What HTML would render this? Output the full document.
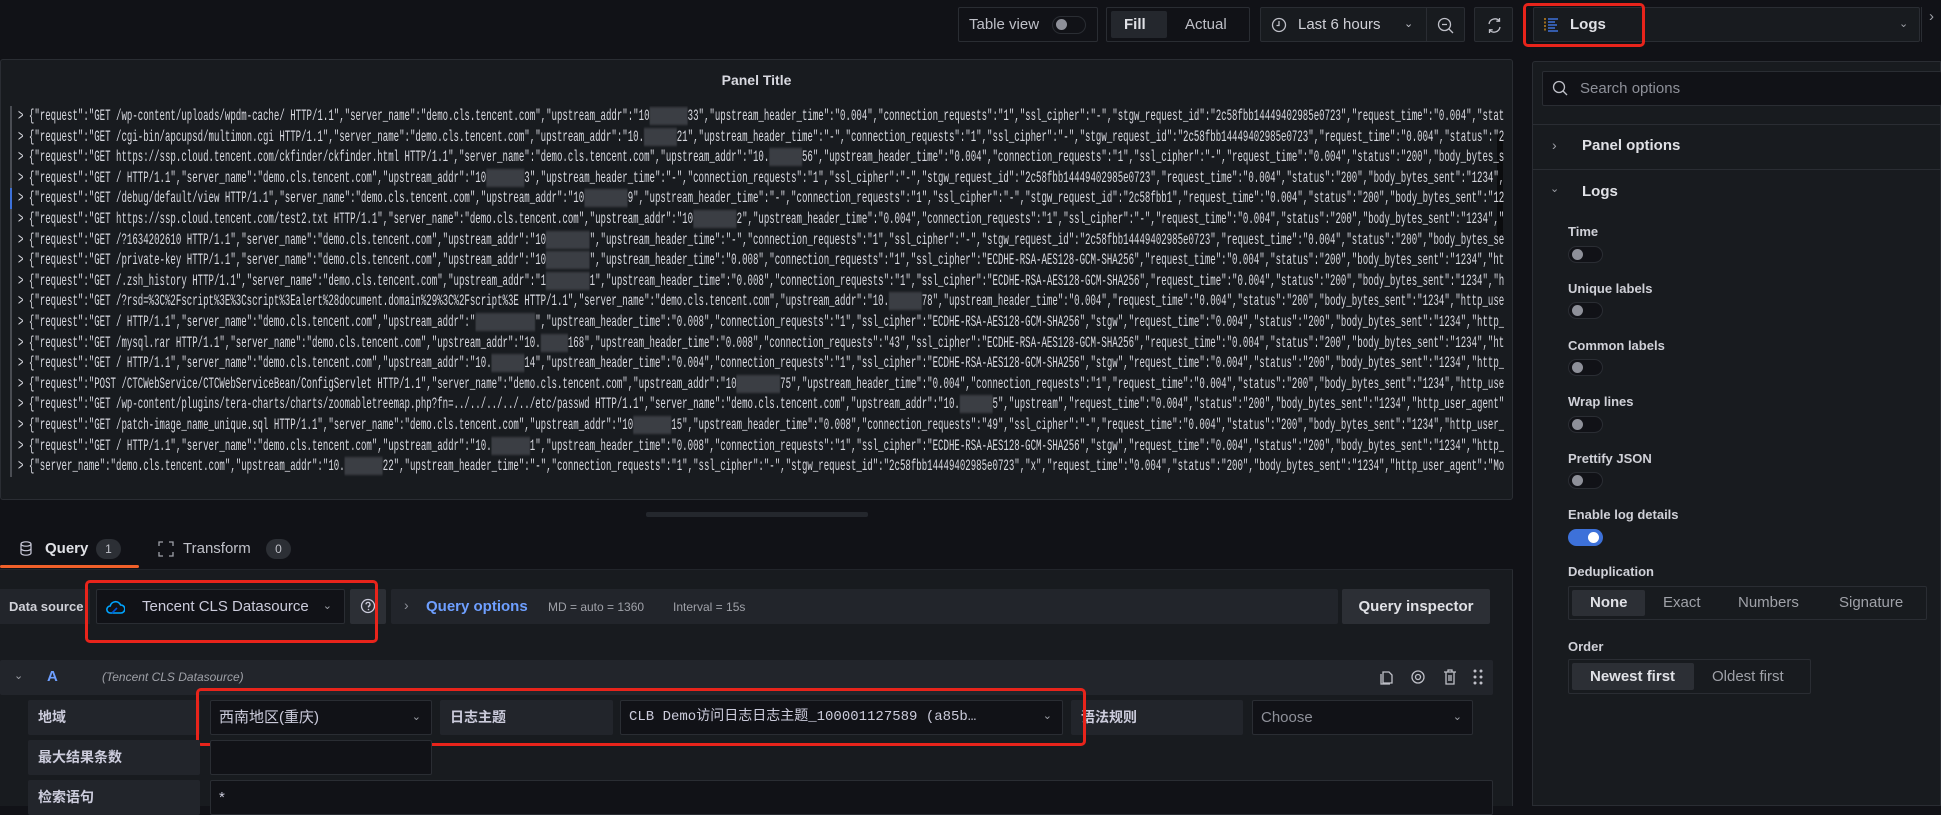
<!DOCTYPE html>
<html><head><meta charset="utf-8"><style>
*{box-sizing:border-box;margin:0;padding:0}
body{width:1941px;height:806px;overflow:hidden;background:#111217;font-family:"Liberation Sans","Noto Sans CJK SC",sans-serif;color:#ccccdc;position:relative}
.a{position:absolute}
.box{position:absolute;border:1px solid #2a2d33;border-radius:2px;background:#181b1f}
.t{font-size:15px}
.logs{position:absolute;left:10px;top:106px;width:1494px;height:392px;overflow:hidden}
.ln{height:20.6px;line-height:20.6px;white-space:nowrap;position:relative;border-left:2px solid #4a4d53;padding-left:6px}
.ln.b{border-left-color:#3d71d9}
.ln span.in{display:inline-block;transform:scaleX(.567);transform-origin:0 50%;font-family:"Liberation Mono",monospace;font-size:16px;color:#d8d9e0}
.ln span.in::after{content:',"request_time":"0.004","status":"200","body_bytes_sent":"1234","http_user_agent":"Mozilla/5.0 (Windows NT 10.0; Win64; x64)","remote_addr":"1.2.3.4"}'}
.bl{background:#3b3e44;color:transparent;filter:blur(1px)}
.tog{position:absolute;width:35px;height:17px;border-radius:9px;background:#111217;border:1px solid #2a2d33}
.tog:after{content:"";position:absolute;left:3px;top:2px;width:11px;height:11px;border-radius:50%;background:#8e9099}
.tog.on{background:#3d71d9;border-color:#3d71d9}
.tog.on:after{left:auto;right:3px;background:#fff}
.lbl{position:absolute;font-size:13px;font-weight:bold;color:#d0d1d8}
.red{position:absolute;border:3px solid #e8241b;border-radius:5px}
.fl{position:absolute;background:#22252b;border-radius:2px;font-size:14px;font-weight:bold;color:#ccccdc;padding-left:10px;line-height:35px}
.in2{position:absolute;background:#111217;border:1px solid #2a2d33;border-radius:2px;font-size:15px;line-height:33px;padding-left:8px;color:#ccccdc}
.chev{position:absolute;right:10px;top:0;font-size:11px;color:#9fa1a8}
</style></head><body>
<!-- toolbar -->
<div class="box" style="left:958px;top:7px;width:140px;height:35px;background:#111217"><span class="a t" style="left:10px;top:8px;color:#bfc0c8">Table view</span><div class="tog" style="left:93px;top:8px;width:34px;height:18px"></div></div>
<div class="box" style="left:1106px;top:7px;width:144px;height:35px;background:#111217"><div class="a" style="left:4px;top:3px;width:56px;height:27px;background:#24272d;border-radius:2px"></div><span class="a t" style="left:17px;top:8px;font-weight:bold;color:#e0e1e6">Fill</span><span class="a t" style="left:78px;top:8px;color:#bfc0c8">Actual</span></div>
<div class="box" style="left:1260px;top:7px;width:205px;height:35px;background:#181b1f">
<svg class="a" style="left:10px;top:9px" width="16" height="16" viewBox="0 0 16 16"><circle cx="8" cy="8" r="6.5" fill="none" stroke="#bfc0c8" stroke-width="1.3"/><path d="M8 4v4.5H5.5" fill="none" stroke="#bfc0c8" stroke-width="1.3"/></svg>
<span class="a t" style="left:37px;top:8px;color:#d0d1d8">Last 6 hours</span><span class="a" style="left:143px;top:9px;font-size:11px;color:#bfc0c8">⌄</span>
<div class="a" style="left:165px;top:0;width:1px;height:33px;background:#2a2d33"></div>
<svg class="a" style="left:176px;top:9px" width="17" height="17" viewBox="0 0 17 17"><circle cx="7.5" cy="7.5" r="6" fill="none" stroke="#bfc0c8" stroke-width="1.3"/><path d="M5 7.5h5M12 12l4 4" stroke="#bfc0c8" stroke-width="1.3"/></svg></div>
<div class="box" style="left:1474px;top:7px;width:39px;height:35px"><svg class="a" style="left:11px;top:9px" width="17" height="17" viewBox="0 0 17 17"><path d="M3 7a6 6 0 0 1 10.5-3M14 10a6 6 0 0 1-10.5 3M13.5 1v3.2h-3.2M3.5 16v-3.2h3.2" fill="none" stroke="#bfc0c8" stroke-width="1.3"/></svg></div>
<div class="box" style="left:1533px;top:7px;width:387px;height:35px">
<svg class="a" style="left:10px;top:9px" width="16" height="16" viewBox="0 0 16 16"><path d="M1 1v14" stroke="#f0a020" stroke-width="1.2" stroke-dasharray="2 1.5"/><path d="M4 2h10M4 5h7M4 8h9M4 11h7M4 14h10" stroke="#3d71d9" stroke-width="1.6"/></svg>
<span class="a t" style="left:36px;top:8px;font-weight:bold;color:#e0e1e6">Logs</span><span class="a" style="left:365px;top:9px;font-size:11px;color:#9fa1a8">⌄</span></div>
<div class="a" style="left:1921px;top:7px;width:1px;height:35px;background:#2a2d33"></div><span class="a" style="left:1929px;top:8px;font-size:15px;color:#9fa1a8">›</span>
<div class="red" style="left:1523px;top:3px;width:122px;height:44px"></div>

<!-- panel -->
<div class="box" style="left:0;top:59px;width:1513px;height:441px;border-radius:3px">
<div class="a" style="left:0;width:1511px;top:12px;text-align:center;font-size:14px;font-weight:bold;color:#d8d9e0">Panel Title</div>
<div class="a" style="left:1496px;top:72px;width:6px;height:105px;background:#0b0c0e;border-radius:3px"></div>
</div>
<div class="logs">
<div class="ln"><span class="in">&gt; {"request":"GET /wp-content/uploads/wpdm-cache/ HTTP/1.1","server_name":"demo.cls.tencent.com","upstream_addr":"10<span class="bl">.xx.xx.</span>33","upstream_header_time":"0.004","connection_requests":"1","ssl_cipher":"-","stgw_request_id":"2c58fbb14449402985e0723"</span></div>
<div class="ln"><span class="in">&gt; {"request":"GET /cgi-bin/apcupsd/multimon.cgi HTTP/1.1","server_name":"demo.cls.tencent.com","upstream_addr":"10.<span class="bl">xx.xx.</span>21","upstream_header_time":"-","connection_requests":"1","ssl_cipher":"-","stgw_request_id":"2c58fbb14449402985e0723"</span></div>
<div class="ln"><span class="in">&gt; {"request":"GET https://ssp.cloud.tencent.com/ckfinder/ckfinder.html HTTP/1.1","server_name":"demo.cls.tencent.com","upstream_addr":"10.<span class="bl">xx.xx.</span>56","upstream_header_time":"0.004","connection_requests":"1","ssl_cipher":"-"</span></div>
<div class="ln"><span class="in">&gt; {"request":"GET / HTTP/1.1","server_name":"demo.cls.tencent.com","upstream_addr":"10<span class="bl">.xx.xx.</span>3","upstream_header_time":"-","connection_requests":"1","ssl_cipher":"-","stgw_request_id":"2c58fbb14449402985e0723"</span></div>
<div class="ln b"><span class="in">&gt; {"request":"GET /debug/default/view HTTP/1.1","server_name":"demo.cls.tencent.com","upstream_addr":"10<span class="bl">.xx.xx.x</span>9","upstream_header_time":"-","connection_requests":"1","ssl_cipher":"-","stgw_request_id":"2c58fbb1"</span></div>
<div class="ln"><span class="in">&gt; {"request":"GET https://ssp.cloud.tencent.com/test2.txt HTTP/1.1","server_name":"demo.cls.tencent.com","upstream_addr":"10<span class="bl">.xx.xx.x</span>2","upstream_header_time":"0.004","connection_requests":"1","ssl_cipher":"-"</span></div>
<div class="ln"><span class="in">&gt; {"request":"GET /?1634202610 HTTP/1.1","server_name":"demo.cls.tencent.com","upstream_addr":"10<span class="bl">.xx.xx.x</span>","upstream_header_time":"-","connection_requests":"1","ssl_cipher":"-","stgw_request_id":"2c58fbb14449402985e0723"</span></div>
<div class="ln"><span class="in">&gt; {"request":"GET /private-key HTTP/1.1","server_name":"demo.cls.tencent.com","upstream_addr":"10<span class="bl">.xx.xx.x</span>","upstream_header_time":"0.008","connection_requests":"1","ssl_cipher":"ECDHE-RSA-AES128-GCM-SHA256"</span></div>
<div class="ln"><span class="in">&gt; {"request":"GET /.zsh_history HTTP/1.1","server_name":"demo.cls.tencent.com","upstream_addr":"1<span class="bl">0.xx.xx.</span>1","upstream_header_time":"0.008","connection_requests":"1","ssl_cipher":"ECDHE-RSA-AES128-GCM-SHA256"</span></div>
<div class="ln"><span class="in">&gt; {"request":"GET /?rsd=%3C%2Fscript%3E%3Cscript%3Ealert%28document.domain%29%3C%2Fscript%3E HTTP/1.1","server_name":"demo.cls.tencent.com","upstream_addr":"10.<span class="bl">xx.xx.</span>78","upstream_header_time":"0.004"</span></div>
<div class="ln"><span class="in">&gt; {"request":"GET / HTTP/1.1","server_name":"demo.cls.tencent.com","upstream_addr":"<span class="bl">10.xx.xx.xx</span>","upstream_header_time":"0.008","connection_requests":"1","ssl_cipher":"ECDHE-RSA-AES128-GCM-SHA256","stgw"</span></div>
<div class="ln"><span class="in">&gt; {"request":"GET /mysql.rar HTTP/1.1","server_name":"demo.cls.tencent.com","upstream_addr":"10.<span class="bl">xx.xx</span>168","upstream_header_time":"0.008","connection_requests":"43","ssl_cipher":"ECDHE-RSA-AES128-GCM-SHA256"</span></div>
<div class="ln"><span class="in">&gt; {"request":"GET / HTTP/1.1","server_name":"demo.cls.tencent.com","upstream_addr":"10.<span class="bl">xx.xx.</span>14","upstream_header_time":"0.004","connection_requests":"1","ssl_cipher":"ECDHE-RSA-AES128-GCM-SHA256","stgw"</span></div>
<div class="ln"><span class="in">&gt; {"request":"POST /CTCWebService/CTCWebServiceBean/ConfigServlet HTTP/1.1","server_name":"demo.cls.tencent.com","upstream_addr":"10<span class="bl">.xx.xx.x</span>75","upstream_header_time":"0.004","connection_requests":"1"</span></div>
<div class="ln"><span class="in">&gt; {"request":"GET /wp-content/plugins/tera-charts/charts/zoomabletreemap.php?fn=../../../../../etc/passwd HTTP/1.1","server_name":"demo.cls.tencent.com","upstream_addr":"10.<span class="bl">xx.xx.</span>5","upstream"</span></div>
<div class="ln"><span class="in">&gt; {"request":"GET /patch-image_name_unique.sql HTTP/1.1","server_name":"demo.cls.tencent.com","upstream_addr":"10<span class="bl">.xx.xx.</span>15","upstream_header_time":"0.008","connection_requests":"49","ssl_cipher":"-"</span></div>
<div class="ln"><span class="in">&gt; {"request":"GET / HTTP/1.1","server_name":"demo.cls.tencent.com","upstream_addr":"10.<span class="bl">xx.xx.x</span>1","upstream_header_time":"0.008","connection_requests":"1","ssl_cipher":"ECDHE-RSA-AES128-GCM-SHA256","stgw"</span></div>
<div class="ln"><span class="in">&gt; {"server_name":"demo.cls.tencent.com","upstream_addr":"10.<span class="bl">xx.xx.x</span>22","upstream_header_time":"-","connection_requests":"1","ssl_cipher":"-","stgw_request_id":"2c58fbb14449402985e0723","x"</span></div>
</div>

<!-- splitter -->
<div class="a" style="left:646px;top:512px;width:222px;height:5px;background:#24272d;border-radius:2px"></div>

<!-- tabs -->
<svg class="a" style="left:20px;top:541px" width="12" height="15" viewBox="0 0 12 15"><ellipse cx="6" cy="3" rx="5" ry="2.2" fill="none" stroke="#ccccdc" stroke-width="1.2"/><path d="M1 3v9c0 1.2 2.2 2.2 5 2.2s5-1 5-2.2V3M1 7.5c0 1.2 2.2 2.2 5 2.2s5-1 5-2.2" fill="none" stroke="#ccccdc" stroke-width="1.2"/></svg>
<span class="a" style="left:45px;top:540px;font-size:15px;font-weight:bold;color:#e0e1e6">Query</span>
<div class="a" style="left:96px;top:539px;width:25px;height:20px;border-radius:10px;background:#2c2f35;font-size:12px;text-align:center;line-height:20px;color:#bfc0c8">1</div>
<svg class="a" style="left:158px;top:541px" width="16" height="16" viewBox="0 0 16 16"><path d="M1 5V1h4M11 1h4v4M15 11v4h-4M5 15H1v-4" fill="none" stroke="#9fa1a8" stroke-width="1.3"/></svg>
<span class="a" style="left:183px;top:540px;font-size:15px;color:#bfc0c8">Transform</span>
<div class="a" style="left:266px;top:539px;width:25px;height:20px;border-radius:10px;background:#2c2f35;font-size:12px;text-align:center;line-height:20px;color:#bfc0c8">0</div>
<div class="a" style="left:0;top:565px;width:139px;height:3px;background:#f0602a;border-radius:2px"></div>
<div class="a" style="left:0;top:569px;width:1513px;height:1px;background:#22252b"></div>

<!-- query area -->
<div class="a" style="left:0;top:570px;width:1513px;height:236px;background:#181b1f;border-right:1px solid #2a2d33"></div>
<div class="a" style="left:0;top:589px;width:90px;height:35px;background:#22252b;font-size:13px;font-weight:bold;line-height:35px;padding-left:9px;color:#d0d1d8">Data source</div>
<div class="in2" style="left:96px;top:589px;width:249px;height:35px;padding-left:45px">Tencent CLS Datasource<span class="chev" style="right:12px">⌄</span></div>
<svg class="a" style="left:106px;top:600px" width="19" height="14" viewBox="0 0 19 14"><path d="M4.5 13a3.5 3.5 0 0 1-.3-7A5.5 5.5 0 0 1 14.6 5a4 4 0 0 1 .4 8z" fill="none" stroke="#00a4ff" stroke-width="1.6"/><path d="M6 13l5-5" stroke="#0052d9" stroke-width="1.6"/></svg>
<div class="a" style="left:350px;top:589px;width:36px;height:35px;background:#2c2f35;border-radius:2px"><svg class="a" style="left:10px;top:9px" width="16" height="16" viewBox="0 0 16 16"><circle cx="8" cy="8" r="6.5" fill="none" stroke="#ccccdc" stroke-width="1.3"/><path d="M6 6.3a2 2 0 1 1 2.5 2V9.5" fill="none" stroke="#ccccdc" stroke-width="1.3"/><circle cx="8.5" cy="11.5" r=".8" fill="#ccccdc"/></svg></div>
<div class="a" style="left:391px;top:589px;width:947px;height:35px;background:#22252b;border-radius:2px"><span class="a" style="left:13px;top:8px;color:#8e9099;font-size:14px">›</span><span class="a" style="left:35px;top:9px;font-size:15px;font-weight:bold;color:#6e9fff">Query options</span><span class="a" style="left:157px;top:11px;font-size:12px;color:#9fa1a8">MD = auto = 1360</span><span class="a" style="left:282px;top:11px;font-size:12px;color:#9fa1a8">Interval = 15s</span></div>
<div class="a" style="left:1342px;top:589px;width:148px;height:35px;background:#2c2f35;border-radius:2px;font-size:15px;font-weight:bold;line-height:35px;text-align:center;color:#e0e1e6">Query inspector</div>
<div class="red" style="left:85px;top:580px;width:293px;height:63px"></div>

<div class="a" style="left:0;top:660px;width:1493px;height:35px;background:#22252b;border-radius:2px">
<span class="a" style="left:14px;top:9px;font-size:11px;color:#9fa1a8">⌄</span>
<span class="a" style="left:47px;top:8px;font-size:15px;font-weight:bold;color:#6e9fff">A</span>
<span class="a" style="left:102px;top:10px;font-size:12px;font-style:italic;color:#9fa1a8">(Tencent CLS Datasource)</span>
<svg class="a" style="left:1378px;top:9px" width="16" height="16" viewBox="0 0 16 16"><path d="M5 3h6l3 3v8H5zM3 5v10h9" fill="none" stroke="#bfc0c8" stroke-width="1.3"/></svg>
<svg class="a" style="left:1410px;top:10px" width="16" height="14" viewBox="0 0 16 14"><circle cx="8" cy="7" r="6" fill="none" stroke="#bfc0c8" stroke-width="1.3"/><circle cx="8" cy="7" r="2.5" fill="none" stroke="#bfc0c8" stroke-width="1.3"/></svg>
<svg class="a" style="left:1443px;top:9px" width="14" height="16" viewBox="0 0 14 16"><path d="M1 3h12M5 3V1h4v2M3 3v12h8V3M6 6v6M8 6v6" fill="none" stroke="#bfc0c8" stroke-width="1.3"/></svg>
<svg class="a" style="left:1473px;top:9px" width="10" height="16" viewBox="0 0 10 16"><g fill="#bfc0c8"><circle cx="2" cy="2" r="1.5"/><circle cx="8" cy="2" r="1.5"/><circle cx="2" cy="8" r="1.5"/><circle cx="8" cy="8" r="1.5"/><circle cx="2" cy="14" r="1.5"/><circle cx="8" cy="14" r="1.5"/></g></svg>
</div>

<div class="fl" style="left:28px;top:700px;width:172px;height:35px">地域</div>
<div class="in2" style="left:210px;top:700px;width:222px;height:35px">西南地区(重庆)<span class="chev">⌄</span></div>
<div class="fl" style="left:440px;top:700px;width:173px;height:35px">日志主题</div>
<div class="in2" style="left:620px;top:700px;width:443px;height:35px;font-family:'Liberation Mono','Noto Sans CJK SC',monospace;font-size:14px">CLB Demo访问日志日志主题_100001127589 (a85b…<span class="chev">⌄</span></div>
<div class="fl" style="left:1071px;top:700px;width:172px;height:35px">语法规则</div>
<div class="in2" style="left:1252px;top:700px;width:221px;height:35px;color:#8e9099">Choose<span class="chev">⌄</span></div>
<div class="red" style="left:196px;top:688px;width:890px;height:58px"></div>
<div class="fl" style="left:28px;top:740px;width:172px;height:35px">最大结果条数</div>
<div class="in2" style="left:210px;top:740px;width:222px;height:35px"></div>
<div class="fl" style="left:28px;top:780px;width:172px;height:35px">检索语句</div>
<div class="in2" style="left:210px;top:780px;width:1283px;height:35px">*</div>

<!-- sidebar -->
<div class="a" style="left:1532px;top:61px;width:409px;height:745px;background:#181b1f;border:1px solid #2a2d33;border-radius:3px 0 0 0"></div>
<div class="in2" style="left:1542px;top:71px;width:400px;height:35px;padding-left:37px;color:#8e9099">Search options</div>
<svg class="a" style="left:1552px;top:80px" width="16" height="16" viewBox="0 0 16 16"><circle cx="7" cy="7" r="5.5" fill="none" stroke="#bfc0c8" stroke-width="1.3"/><path d="M11 11l4 4" stroke="#bfc0c8" stroke-width="1.3"/></svg>
<div class="a" style="left:1533px;top:124px;width:408px;height:1px;background:#2a2d33"></div>
<span class="a" style="left:1552px;top:137px;font-size:14px;color:#9fa1a8">›</span>
<span class="a" style="left:1582px;top:137px;font-size:15px;font-weight:bold;color:#e0e1e6">Panel options</span>
<div class="a" style="left:1533px;top:169px;width:408px;height:1px;background:#2a2d33"></div>
<span class="a" style="left:1550px;top:182px;font-size:11px;color:#9fa1a8">⌄</span>
<span class="a" style="left:1582px;top:183px;font-size:15px;font-weight:bold;color:#e0e1e6">Logs</span>
<div class="lbl" style="left:1568px;top:224px">Time</div><div class="tog" style="left:1568px;top:246px"></div>
<div class="lbl" style="left:1568px;top:281px">Unique labels</div><div class="tog" style="left:1568px;top:302px"></div>
<div class="lbl" style="left:1568px;top:338px">Common labels</div><div class="tog" style="left:1568px;top:359px"></div>
<div class="lbl" style="left:1568px;top:394px">Wrap lines</div><div class="tog" style="left:1568px;top:416px"></div>
<div class="lbl" style="left:1568px;top:451px">Prettify JSON</div><div class="tog" style="left:1568px;top:472px"></div>
<div class="lbl" style="left:1568px;top:507px">Enable log details</div><div class="tog on" style="left:1568px;top:529px"></div>
<div class="lbl" style="left:1568px;top:564px">Deduplication</div>
<div class="a" style="left:1568px;top:586px;width:359px;height:34px;border:1px solid #2a2d33;border-radius:2px;font-size:15px;color:#9fa1a8">
<div class="a" style="left:3px;top:3px;width:73px;height:26px;background:#2c2f35;border-radius:2px"></div>
<span class="a" style="left:21px;top:7px;font-weight:bold;color:#e0e1e6">None</span><span class="a" style="left:94px;top:7px">Exact</span><span class="a" style="left:169px;top:7px">Numbers</span><span class="a" style="left:270px;top:7px">Signature</span></div>
<div class="lbl" style="left:1568px;top:639px">Order</div>
<div class="a" style="left:1568px;top:659px;width:243px;height:35px;border:1px solid #2a2d33;border-radius:2px;font-size:15px;color:#9fa1a8">
<div class="a" style="left:3px;top:3px;width:122px;height:27px;background:#2c2f35;border-radius:2px"></div>
<span class="a" style="left:21px;top:8px;font-weight:bold;color:#e0e1e6">Newest first</span><span class="a" style="left:143px;top:8px">Oldest first</span></div>
</body></html>
